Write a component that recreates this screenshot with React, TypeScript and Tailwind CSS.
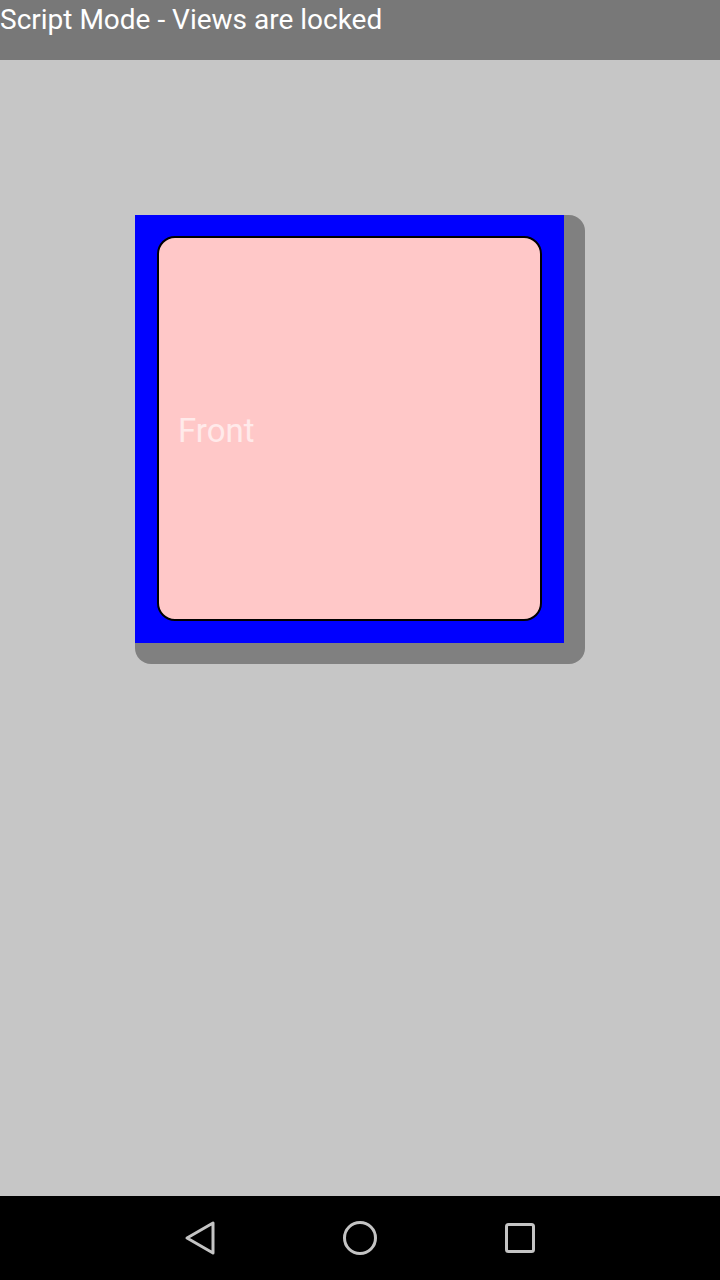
import React from "react";

export default function App() {
  return (
    <div
      className="w-[720px] h-[1280px] flex flex-col bg-[#c6c6c6] overflow-hidden"
      style={{ fontFamily: "Roboto, 'Liberation Sans', sans-serif" }}
    >
      <div className="h-[60px] shrink-0 bg-[#787878]">
        <div className="text-[28px] leading-[38px] text-white pl-0 mt-[1px]">Script Mode - Views are locked</div>
      </div>
      <div className="flex-1 pt-[155px] pl-[135px]">
        <div className="w-[450px] h-[449px] rounded-[16px] bg-[#808080] pr-[21px] pb-[21px]">
          <div className="w-[429px] h-[428px] bg-[#0000ff] pt-[21px] pl-[22px]">
            <div className="w-[385px] h-[385px] rounded-[18px] border-2 border-black bg-[#ffc8c8] flex items-center pl-[19px]">
              <span className="text-[33px] text-[#ffeaea] leading-none mt-[3px]">Front</span>
            </div>
          </div>
        </div>
      </div>
      <div className="h-[84px] shrink-0 bg-black flex items-center justify-center gap-[112px]">
        <svg width="48" height="48" viewBox="0 0 48 48" fill="none" stroke="#c4c4c4" strokeWidth="3" strokeLinejoin="round">
          <path d="M37 9 L37 39 L11 24 Z" />
        </svg>
        <svg width="48" height="48" viewBox="0 0 48 48" fill="none" stroke="#c4c4c4" strokeWidth="3">
          <circle cx="24" cy="24" r="15.5" />
        </svg>
        <svg width="48" height="48" viewBox="0 0 48 48" fill="none" stroke="#c4c4c4" strokeWidth="3">
          <rect x="10.5" y="10.5" width="27" height="27" rx="2" />
        </svg>
      </div>
    </div>
  );
}
